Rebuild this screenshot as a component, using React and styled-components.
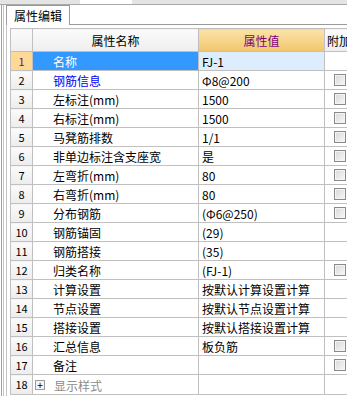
import styled, { createGlobalStyle } from 'styled-components';

const GlobalStyle = createGlobalStyle`
  html, body {
    margin: 0;
    padding: 0;
    background: #fff;
  }
  body {
    width: 347px;
    height: 396px;
    overflow: hidden;
    font-family: "Noto Sans CJK SC", "Liberation Sans", sans-serif;
    font-size: 12px;
    color: #000;
  }
`;

const rows = [
  { name: '名称', value: 'FJ-1', selected: true },
  { name: '钢筋信息', value: 'Φ8@200', link: true, check: true },
  { name: '左标注(mm)', value: '1500', check: true },
  { name: '右标注(mm)', value: '1500', check: true },
  { name: '马凳筋排数', value: '1/1', check: true },
  { name: '非单边标注含支座宽', value: '是', check: true },
  { name: '左弯折(mm)', value: '80', check: true },
  { name: '右弯折(mm)', value: '80', check: true },
  { name: '分布钢筋', value: '(Φ6@250)', check: true },
  { name: '钢筋锚固', value: '(29)' },
  { name: '钢筋搭接', value: '(35)' },
  { name: '归类名称', value: '(FJ-1)', check: true },
  { name: '计算设置', value: '按默认计算设置计算' },
  { name: '节点设置', value: '按默认节点设置计算' },
  { name: '搭接设置', value: '按默认搭接设置计算' },
  { name: '汇总信息', value: '板负筋', check: true },
  { name: '备注', value: '', check: true },
  { name: '显示样式', value: '', group: true }
];

const Screen = styled.div`
  display: flex;
  flex-direction: column;
  width: 347px;
  height: 396px;
`;

const TopStrip = styled.div`
  height: 4px;
  flex-shrink: 0;
  display: flex;
  background: #e4e4e4;
  border-bottom: 1px solid #a8a8a8;
`;

const StripField = styled.div`
  width: 52px;
  margin-left: 80px;
  background: #fff;
`;

const Main = styled.div`
  flex: 1;
  display: flex;
  min-height: 0;
`;

const Rail = styled.div`
  width: 6px;
  flex-shrink: 0;
  background: linear-gradient(
    to right,
    #fff 0 1px,
    #a0a0a0 1px 2px,
    #fff 2px 3px,
    #c4c4c4 3px 4px,
    #fff 4px 6px
  );
`;

const Panel = styled.div`
  flex: 1;
  display: flex;
  flex-direction: column;
  min-width: 0;
`;

const TabBar = styled.div`
  display: flex;
  height: 20px;
  flex-shrink: 0;
`;

const Tab = styled.div`
  width: 64px;
  box-sizing: border-box;
  border: 1px solid #9a9a9a;
  border-bottom: none;
  padding-left: 7px;
  line-height: 19px;
  font-size: 12px;
  background: #fff;
`;

const TabRest = styled.div`
  flex: 1;
  border-bottom: 1px solid #9a9a9a;
`;

const Sheet = styled.div`
  flex: 1;
  border-left: 1px solid #c4c4c4;
  padding: 3px 0 0 3px;
  overflow: hidden;
`;

const Grid = styled.table`
  border-collapse: collapse;
  table-layout: fixed;
  width: 354px;
`;

const HeadCell = styled.th`
  height: 22px;
  padding: 0;
  border: 1px solid #c0c0c0;
  font-weight: normal;
  font-size: 12px;
  text-align: ${({ $left }) => ($left ? 'left' : 'center')};
  padding-left: ${({ $left }) => ($left ? '2px' : '0')};
  white-space: nowrap;
  overflow: hidden;
  color: ${({ $accent }) => ($accent ? '#800080' : '#000')};
  background: ${({ $accent }) =>
    $accent
      ? 'linear-gradient(#fde3a7, #f1c66e)'
      : 'linear-gradient(#fbfbfb, #eeeeee)'};
`;

const Row = styled.tr`
  height: 19px;
`;

const NumCell = styled.td`
  padding: 0;
  border: 1px solid #c0c0c0;
  text-align: center;
  font-size: 11px;
  color: ${({ $selected }) => ($selected ? '#800080' : '#000')};
  background: ${({ $selected }) =>
    $selected ? '#fed994' : 'linear-gradient(#fbfbfb, #ececec)'};
`;

const NameCell = styled.td`
  padding: 0 0 0 ${({ $group }) => ($group ? '2px' : '20px')};
  border: 1px solid #c0c0c0;
  white-space: nowrap;
  overflow: hidden;
  color: ${({ $selected, $link, $group }) =>
    $selected ? '#fff' : $link ? '#0000ff' : $group ? '#8c8c8c' : '#000'};
  background: ${({ $selected }) => ($selected ? '#3399ff' : '#fff')};
`;

const GroupLabel = styled.span`
  display: inline-flex;
  align-items: center;
  gap: 9px;
`;

const Expander = styled.span`
  width: 10px;
  height: 10px;
  box-sizing: border-box;
  border: 1px solid #9a9a9a;
  display: inline-flex;
  align-items: center;
  justify-content: center;
  color: #000;
  font-size: 10px;
  line-height: 1;
  background: #f4f4f4;
`;

const ValueCell = styled.td`
  padding: 0 0 0 3px;
  border: 1px solid #c0c0c0;
  white-space: nowrap;
  overflow: hidden;
  background: ${({ $selected }) => ($selected ? '#ddedfd' : '#fff')};
`;

const ExtraCell = styled.td`
  padding: 0 0 0 9px;
  border: 1px solid #c0c0c0;
  line-height: 0;
`;

const CheckBox = styled.span`
  display: inline-block;
  width: 12px;
  height: 12px;
  box-sizing: border-box;
  border: 1px solid #8a8a8a;
  box-shadow: inset 0 0 0 1px #f4f4f4;
  background: linear-gradient(135deg, #d8d8d8, #f8f8f8);
`;

export default function App() {
  return (
    <>
      <GlobalStyle />
      <Screen>
        <TopStrip>
          <StripField />
        </TopStrip>
        <Main>
          <Rail />
          <Panel>
            <TabBar>
              <Tab>属性编辑</Tab>
              <TabRest />
            </TabBar>
            <Sheet>
              <Grid>
                <colgroup>
                  <col style={{ width: 22 }} />
                  <col style={{ width: 166 }} />
                  <col style={{ width: 126 }} />
                  <col style={{ width: 40 }} />
                </colgroup>
                <thead>
                  <tr>
                    <HeadCell />
                    <HeadCell>属性名称</HeadCell>
                    <HeadCell $accent>属性值</HeadCell>
                    <HeadCell $left>附加</HeadCell>
                  </tr>
                </thead>
                <tbody>
                  {rows.map((row, i) => (
                    <Row key={row.name}>
                      <NumCell $selected={row.selected}>{i + 1}</NumCell>
                      <NameCell $selected={row.selected} $link={row.link} $group={row.group}>
                        {row.group ? (
                          <GroupLabel>
                            <Expander>+</Expander>
                            {row.name}
                          </GroupLabel>
                        ) : (
                          row.name
                        )}
                      </NameCell>
                      <ValueCell $selected={row.selected}>{row.value}</ValueCell>
                      <ExtraCell>{row.check && <CheckBox />}</ExtraCell>
                    </Row>
                  ))}
                </tbody>
              </Grid>
            </Sheet>
          </Panel>
        </Main>
      </Screen>
    </>
  );
}
